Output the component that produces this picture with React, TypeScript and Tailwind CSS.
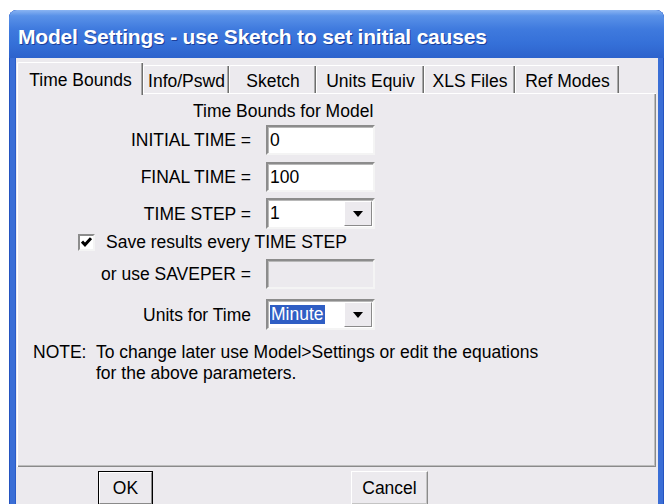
import React from "react";

const ui = "font-['Liberation_Sans',Arial,sans-serif] text-[17.5px] text-black";

function Sunken({ children, disabled }: { children?: React.ReactNode; disabled?: boolean }) {
  return (
    <div
      className={`h-[30px] w-[109px] flex items-center border-2 border-t-[#8c8c8c] border-l-[#8c8c8c] border-b-[#f4f4f4] border-r-[#f4f4f4] shadow-[inset_1px_1px_0_#b8b8b8] ${
        disabled ? "bg-[#ECEAEE]" : "bg-white"
      }`}
    >
      {children}
    </div>
  );
}

function DropArrow() {
  return (
    <div className="h-full w-[28px] flex items-center justify-center bg-[#ECEAEE] border border-t-white border-l-white border-b-[#8a8a8a] border-r-[#8a8a8a]">
      <svg width="10" height="6" viewBox="0 0 10 6">
        <path d="M0 0h10L5 6z" fill="#000" />
      </svg>
    </div>
  );
}

function Combo({ children }: { children: React.ReactNode }) {
  return (
    <div className="h-[31px] w-[109px] flex items-stretch bg-white border-2 border-t-[#8c8c8c] border-l-[#8c8c8c] border-b-[#f4f4f4] border-r-[#f4f4f4] shadow-[inset_1px_1px_0_#b8b8b8]">
      <div className="flex-1 flex items-center pl-[2px]">{children}</div>
      <div className="py-[1px] pr-[1px]">
        <DropArrow />
      </div>
    </div>
  );
}

function Row({ label, children, className = "" }: { label: string; children: React.ReactNode; className?: string }) {
  return (
    <div className={`flex items-center ${className}`}>
      <span className="w-[233px] text-right leading-5">{label}</span>
      <div className="ml-[15px]">{children}</div>
    </div>
  );
}

const tabs = [
  { name: "Info/Pswd", w: "w-[86px]" },
  { name: "Sketch", w: "w-[87px]" },
  { name: "Units Equiv", w: "w-[108px]" },
  { name: "XLS Files", w: "w-[91px]" },
  { name: "Ref Modes", w: "w-[104px]" },
];

export default function App() {
  return (
    <div className={`w-[664px] h-[504px] overflow-hidden bg-white pt-[10px] pl-[9px] ${ui}`}>
      <div className="w-[655px] h-[520px] flex flex-col rounded-t-[8px] bg-[#3a6ed6] shadow-[inset_1px_0_0_#2453c0,inset_-1px_0_0_#2453c0,inset_0_1px_0_#2a5cc8]">
        {/* title bar */}
        <div className="h-[48px] shrink-0 flex items-center pl-[9px] pt-[5px] rounded-t-[8px] bg-[linear-gradient(to_bottom,#8ab4f2_0%,#5a92e8_12%,#3f7ade_40%,#3570d8_70%,#2d62cc_100%)]">
          <span className="font-['Liberation_Sans',Arial,sans-serif] font-bold text-[21px] tracking-[-0.2px] text-white [text-shadow:1px_1px_0_#1d3f9a]">
            Model Settings - use Sketch to set initial causes
          </span>
        </div>

        {/* client area */}
        <div className="flex-1 mx-[6px] bg-[#ECEAEE] pt-[4px] pl-[2px] shadow-[inset_1px_0_0_#2a5cc8]">
          {/* tab strip */}
          <div className="h-[31px] flex items-end">
            <div className="relative z-10 h-[33px] -mb-[2px] w-[126px] flex items-start justify-center pt-[4px] bg-[#ECEAEE] border-l border-t border-white rounded-tl-[2px] shadow-[inset_-1px_0_0_#6e6e6e,inset_-2px_0_0_#a8a8a8]">
              Time Bounds
            </div>
            {tabs.map((t) => (
              <div
                key={t.name}
                className={`${t.w} h-[28px] flex items-start justify-center pt-[2px] border-l border-t border-white rounded-tl-[2px] shadow-[inset_-1px_0_0_#6e6e6e,inset_-2px_0_0_#a8a8a8]`}
              >
                {t.name}
              </div>
            ))}
          </div>

          {/* tab page */}
          <div className="w-[639px] h-[374px] border-l border-t border-white shadow-[inset_-1px_-1px_0_#8a8a8a,inset_-2px_-2px_0_#bdbdbd] pt-[7px]">
            <div className="pl-[175px] leading-5">Time Bounds for Model</div>

            <Row label="INITIAL TIME =" className="mt-[4px]">
              <Sunken>
                <span className="pl-[2px]">0</span>
              </Sunken>
            </Row>
            <Row label="FINAL TIME =" className="mt-[7px]">
              <Sunken>
                <span className="pl-[2px]">100</span>
              </Sunken>
            </Row>
            <Row label="TIME STEP =" className="mt-[6px]">
              <Combo>1</Combo>
            </Row>

            <div className="mt-[4px] flex items-center pl-[60px] h-[18px]">
              <div className="w-[17px] h-[17px] bg-white border-2 border-t-[#8c8c8c] border-l-[#8c8c8c] border-b-[#f4f4f4] border-r-[#f4f4f4] flex items-center justify-center">
                <svg width="11" height="10" viewBox="0 0 11 10">
                  <path d="M1 4.5l3 3.2 6-6.5" fill="none" stroke="#000" strokeWidth="3" />
                </svg>
              </div>
              <span className="ml-[11px] leading-5">Save results every TIME STEP</span>
            </div>

            <Row label="or use SAVEPER =" className="mt-[8px]">
              <Sunken disabled />
            </Row>
            <Row label="Units for Time" className="mt-[10px]">
              <Combo>
                <span className="bg-[#2f5ec4] text-white px-[1px] leading-[19px]">Minute</span>
              </Combo>
            </Row>

            <div className="mt-[12px] pl-[15px] flex leading-[21px]">
              <span className="w-[63px] shrink-0">NOTE:</span>
              <span>
                To change later use Model&gt;Settings or edit the equations
                <br />
                for the above parameters.
              </span>
            </div>
          </div>

          {/* buttons */}
          <div className="mt-[4px] flex">
            <div className="ml-[81px] w-[55px] h-[34px] border border-black">
              <div className="w-full h-full flex items-center justify-center border border-t-white border-l-white border-b-[#8a8a8a] border-r-[#8a8a8a]">
                OK
              </div>
            </div>
            <div className="ml-[198px] w-[77px] h-[34px] flex items-center justify-center border border-t-white border-l-white border-b-[#8a8a8a] border-r-[#8a8a8a] shadow-[inset_-1px_-1px_0_#c4c4c4]">
              Cancel
            </div>
          </div>
        </div>
      </div>
    </div>
  );
}
